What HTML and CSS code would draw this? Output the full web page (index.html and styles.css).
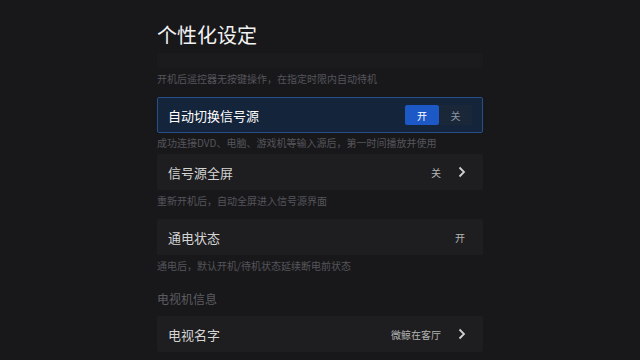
FILE: index.html
```html
<!DOCTYPE html>
<html lang="zh-CN">
<head>
    <meta charset="UTF-8">
    <title>个性化设定</title>
    <meta name="viewport" content="width=device-width, initial-scale=1.0">
    <link rel="stylesheet" href="styles.css">
</head>
<body>
    <div class="settings">
        <h1 class="page-title">个性化设定</h1>

        <div class="card card-stub"></div>
        <div class="desc desc-first">开机后遥控器无按键操作，在指定时限内自动待机</div>

        <div class="card card-active">
            <span class="label">自动切换信号源</span>
            <div class="switch">
                <span class="switch-opt on">开</span>
                <span class="switch-opt">关</span>
            </div>
        </div>
        <div class="desc desc-short">成功连接DVD、电脑、游戏机等输入源后，第一时间播放并使用</div>

        <div class="card">
            <span class="label">信号源全屏</span>
            <div class="value">
                <span>关</span>
                <svg class="chevron" width="8" height="12" viewBox="0 0 8 12"><path d="M1.5 1.5 L6 6 L1.5 10.5" fill="none" stroke="#d0d0d0" stroke-width="1.8"/></svg>
            </div>
        </div>
        <div class="desc">重新开机后，自动全屏进入信号源界面</div>

        <div class="card">
            <span class="label">通电状态</span>
            <div class="value value-plain">
                <span>开</span>
            </div>
        </div>
        <div class="desc">通电后，默认开机/待机状态延续断电前状态</div>

        <div class="section-title">电视机信息</div>

        <div class="card">
            <span class="label">电视名字</span>
            <div class="value">
                <span>微鲸在客厅</span>
                <svg class="chevron" width="8" height="12" viewBox="0 0 8 12"><path d="M1.5 1.5 L6 6 L1.5 10.5" fill="none" stroke="#d0d0d0" stroke-width="1.8"/></svg>
            </div>
        </div>
    </div>
</body>
</html>
```

FILE: styles.css
```css
body {
    margin: 0;
    background-color: #18181a;
    color: #d6d6d6;
    font-family: "Noto Sans CJK SC", "Liberation Sans", sans-serif;
    height: 360px;
    overflow: hidden;
}

.settings {
    width: 326px;
    margin-left: 157px;
}

.page-title {
    margin: 0;
    padding-top: 21px;
    height: 32px;
    font-size: 20px;
    line-height: 28px;
    font-weight: normal;
    color: #f2f2f2;
}

.card {
    display: flex;
    align-items: center;
    justify-content: space-between;
    height: 36px;
    padding: 0 17px 0 11px;
    background-color: #1e1e20;
    border-radius: 2px;
    box-sizing: border-box;
}

.card-stub {
    height: 15px;
    background-color: #1b1b1d;
}

.card-active {
    background-color: #14243a;
    border: 1px solid #27508a;
    padding-right: 10px;
    padding-left: 10px;
}

.label {
    font-size: 13px;
    color: #d4d4d4;
}

.card-active .label {
    color: #ffffff;
}

.switch {
    display: flex;
    height: 20px;
}

.switch-opt {
    width: 33px;
    display: flex;
    align-items: center;
    justify-content: center;
    font-size: 10px;
    color: #8a94a0;
    background-color: #1a2738;
}

.switch-opt.on {
    background-color: #1c58c6;
    color: #ffffff;
    border-radius: 2px;
    width: 34px;
}

.value {
    display: flex;
    align-items: center;
    gap: 17px;
    font-size: 10px;
    color: #b4b4b4;
}

.value-plain {
    margin-right: 1px;
}

.chevron {
    display: block;
}

.desc {
    padding: 5px 0 12px;
    font-size: 10px;
    line-height: 12px;
    color: #55555a;
}

.desc-first {
    padding: 5px 0 12px;
}

.desc-short {
    padding: 4px 0 5px;
}

.section-title {
    padding: 8px 0 10px;
    font-size: 12px;
    line-height: 14px;
    color: #5c5c60;
}
```
